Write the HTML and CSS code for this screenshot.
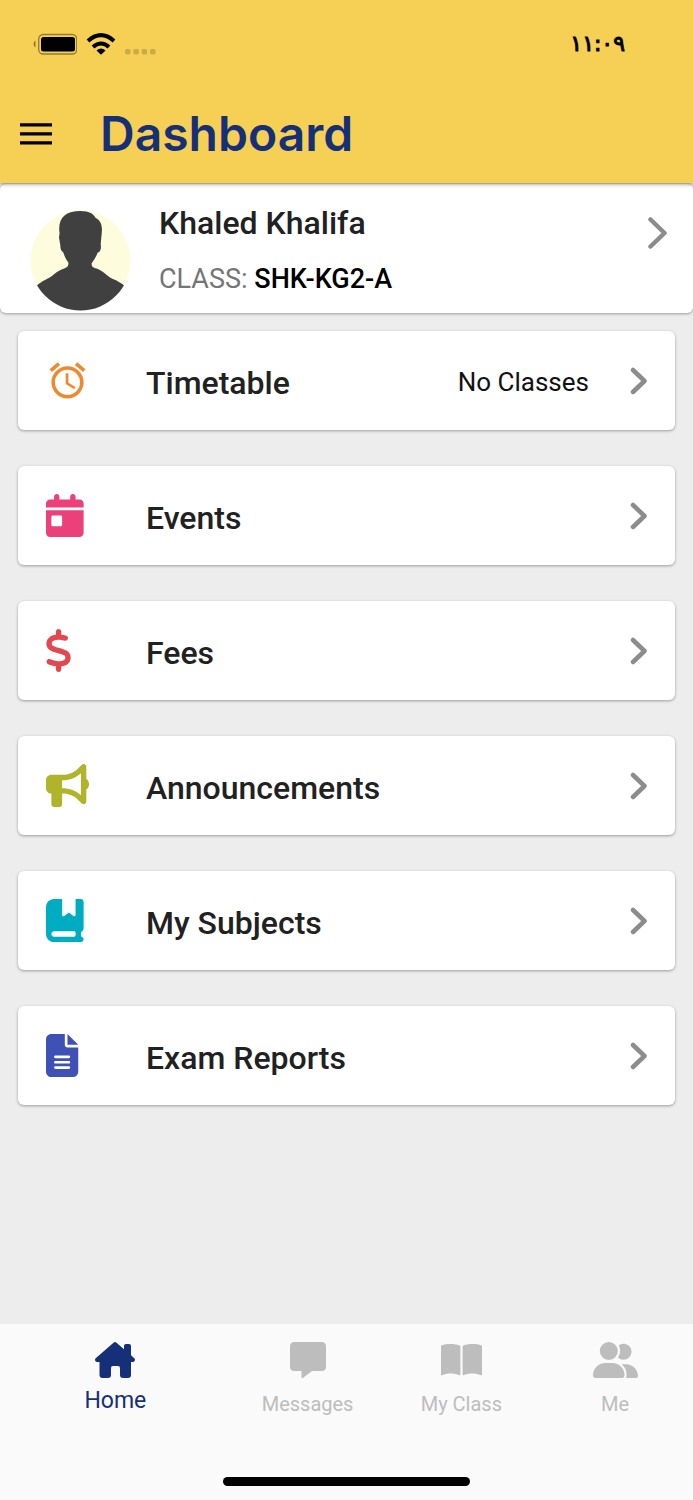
FILE: index.html
```html
<!DOCTYPE html>
<html lang="en">
<head>
<meta charset="utf-8">
<meta name="viewport" content="width=device-width, initial-scale=1">
<title>Dashboard</title>
<link rel="stylesheet" href="styles.css">
</head>
<body>
<div class="app">
  <header class="header">
    <div class="status">
      <div class="status-icons">
        <svg width="44" height="22" viewBox="0 0 44 22" aria-hidden="true"><path d="M2.500 7.500C0 9 0 13 2.500 14.500z" fill="#8d7830"/><rect x="5.700" y="1.500" width="38" height="19.500" rx="4.500" fill="none" stroke="#927c34" stroke-width="1.300"/><rect x="8" y="4" width="34" height="14.500" rx="2.500"/></svg>
        <svg class="wifi" width="30" height="22" viewBox="0 0 30 22" aria-hidden="true"><g fill="none" stroke="#000" stroke-width="4"><path d="M2 8Q15-3.600 28 8"/><path d="M7 14Q15 7 23 14"/></g><path d="M10.500 17.500Q15 13.600 19.500 17.500L15 21.800z"/></svg>
        <svg class="signal" width="32" height="6" viewBox="0 0 32 6" fill="#cbab45" aria-hidden="true"><rect width="5.600" height="5.600" rx="1.800"/><rect x="8.300" width="5.600" height="5.600" rx="1.800"/><rect x="16.600" width="5.600" height="5.600" rx="1.800"/><rect x="25" width="5.600" height="5.600" rx="1.800"/></svg>
      </div>
      <time class="clock" lang="ar">١١:٠٩</time>
    </div>
    <div class="titlebar">
      <button class="menu" type="button" aria-label="Menu"><svg width="32" height="22" viewBox="0 0 32 22"><path d="M0 1.800h32M0 10.800h32M0 19.800h32" stroke="#000" stroke-width="3.200"/></svg></button>
      <h1 class="title">Dashboard</h1>
    </div>
  </header>
  <main class="main">
    <a class="profile" href="#profile">
      <svg class="avatar" viewBox="0 0 100 100" aria-hidden="true"><defs><clipPath id="round"><circle cx="50" cy="50" r="49.500"/></clipPath></defs><g clip-path="url(#round)"><rect width="100" height="100" fill="#fdfcdc"/><path d="M29 21C28 7 36 1 50 1C59 1 63 4 65 8C70 10 72 16 71 23L70 34C71 39 69 42 67 42C65 48 62 51 61 53C61 56 62 57 66 58C74 61 77 67 84 69C90 72 93 74 98 79V101H0V79C8 74 11 71 17 68C23 66 26 60 34 58C38 56 38 55 38 52C35 48 34 45 33 42C31 41 30 39 30 35L29 29C28 26 30 24 29 21z" fill="#404040"/></g></svg>
      <span class="profile-text">
        <span class="name">Khaled Khalifa</span>
        <span class="class-line">CLASS: <b class="class-code">SHK-KG2-A</b></span>
      </span>
      <svg class="profile-arrow" width="20" height="32" viewBox="0 0 20 32" aria-hidden="true"><path d="M2.500 2.500L16.500 16L2.500 29.500"/></svg>
    </a>
    <nav class="list" aria-label="Sections">
      <a class="card" href="#timetable">
        <svg class="icon orange" viewBox="0 0 24 24" aria-hidden="true"><path d="M12 20a7 7 0 0 1-7-7 7 7 0 0 1 7-7 7 7 0 0 1 7 7 7 7 0 0 1-7 7m0-16a9 9 0 0 0-9 9 9 9 0 0 0 9 9 9 9 0 0 0 9-9 9 9 0 0 0-9-9m.5 4H11v6l4.750 2.850.750-1.230-4-2.370V8M7.880 3.390 6.600 1.860 2 5.710l1.290 1.530 4.590-3.850M22 5.720l-4.600-3.860-1.290 1.530 4.600 3.860L22 5.720z"/></svg>
        <span class="label">Timetable</span><span class="note">No Classes</span>
        <svg class="arrow" viewBox="0 0 18 28" aria-hidden="true"><path d="M3 3L14.500 14L3 25"/></svg>
      </a>
      <a class="card" href="#events">
        <svg class="icon pink" viewBox="0 0 512 512" aria-hidden="true"><path d="M128 0c17.700 0 32 14.300 32 32V64H288V32c0-17.700 14.300-32 32-32s32 14.300 32 32V64h48c26.500 0 48 21.500 48 48v48H0V112C0 85.500 21.500 64 48 64H96V32c0-17.700 14.300-32 32-32zM0 192H448V464c0 26.500-21.500 48-48 48H48c-26.500 0-48-21.500-48-48V192zm80 64c-8.800 0-16 7.200-16 16v96c0 8.800 7.200 16 16 16h96c8.800 0 16-7.200 16-16V272c0-8.800-7.200-16-16-16H80z"/></svg>
        <span class="label">Events</span>
        <svg class="arrow" viewBox="0 0 18 28" aria-hidden="true"><path d="M3 3L14.500 14L3 25"/></svg>
      </a>
      <a class="card" href="#fees">
        <svg class="icon red" viewBox="10 0 512 512" aria-hidden="true"><path d="M160 0c17.700 0 32 14.300 32 32V67.700c1.600 .2 3.100 .4 4.700 .7c.4 .1 .7 .1 1.100 .2l48 8.800c17.400 3.200 28.900 19.900 25.700 37.200s-19.900 28.900-37.200 25.700l-47.500-8.700c-31.300-4.600-58.900-1.500-78.300 6.200s-27.200 18.300-29 28.100c-2 10.700-.5 16.700 1.200 20.400c1.800 3.900 5.500 8.300 12.800 13.200c16.300 10.700 41.300 17.700 73.700 26.300l2.900 .8c28.600 7.600 63.600 16.800 89.600 33.800c14.200 9.300 27.600 21.900 35.900 39.500c8.500 17.900 10.300 37.900 6.400 59.200c-6.900 38-33.100 63.400-65.600 76.700c-13.700 5.600-28.600 9.200-44.400 11V480c0 17.700-14.300 32-32 32s-32-14.300-32-32V445.100c-.4-.1-.9-.1-1.300-.2l-.2 0c-24.400-3.800-64.500-14.300-91.500-26.300c-16.100-7.200-23.400-26.100-16.200-42.200s26.100-23.400 42.200-16.200c20.900 9.300 55.300 18.500 75.200 21.600c31.900 4.700 58.200 2 76-5.300c16.900-6.900 24.600-16.900 26.800-28.900c1.900-10.600 .4-16.700-1.300-20.400c-1.900-4-5.600-8.400-13-13.300c-16.400-10.700-41.500-17.700-74-26.300l-2.800-.7c-28.500-7.600-63.400-16.900-89.400-33.900c-14.200-9.300-27.500-22-35.800-39.600c-8.400-17.900-10.100-37.900-6.100-59.200C23.700 116 52.300 91.200 84.800 78.300c13.300-5.300 27.900-8.900 43.200-11V32c0-17.700 14.300-32 32-32z"/></svg>
        <span class="label">Fees</span>
        <svg class="arrow" viewBox="0 0 18 28" aria-hidden="true"><path d="M3 3L14.500 14L3 25"/></svg>
      </a>
      <a class="card" href="#announcements">
        <svg class="icon olive" viewBox="0 0 512 512" aria-hidden="true"><path d="M480 32c0-12.900-7.800-24.600-19.800-29.600s-25.700-2.200-34.900 6.900L381.700 53c-48 48-113.100 75-181 75H64c-35.300 0-64 28.700-64 64v96c0 35.300 28.700 64 64 64v128c0 17.700 14.300 32 32 32h64c17.700 0 32-14.300 32-32V352h8.700c67.900 0 133 27 181 75l43.600 43.600c9.200 9.200 22.900 11.900 34.900 6.900s19.800-16.600 19.800-29.600V300.400c18.600-8.800 32-32.500 32-60.400s-13.400-51.600-32-60.400V32zm-64 76.700V371.300C357.200 317.800 280.500 288 200.700 288H192V192h8.700c79.800 0 156.500-29.800 215.300-83.300z"/></svg>
        <span class="label">Announcements</span>
        <svg class="arrow" viewBox="0 0 18 28" aria-hidden="true"><path d="M3 3L14.500 14L3 25"/></svg>
      </a>
      <a class="card" href="#subjects">
        <svg class="icon teal" viewBox="0 0 512 512" aria-hidden="true"><path d="M0 96C0 43 43 0 96 0h96V190.700c0 13.400 15.500 20.900 26 12.500L272 160l54 43.200c10.500 8.400 26 .9 26-12.500V0h64c17.700 0 32 14.300 32 32V352c0 19-12 32-26 38c-8 18-8 40 0 58c14 4 26 16 26 32c0 17.700-14.300 32-32 32H96c-53 0-96-43-96-96V96zM64 416c0 17.700 14.300 32 32 32H336c24 0 24-64 0-64H96c-17.700 0-32 14.300-32 32z"/></svg>
        <span class="label">My Subjects</span>
        <svg class="arrow" viewBox="0 0 18 28" aria-hidden="true"><path d="M3 3L14.500 14L3 25"/></svg>
      </a>
      <a class="card" href="#reports">
        <svg class="icon indigo" viewBox="0 0 512 512" aria-hidden="true"><path d="M64 0C28.700 0 0 28.700 0 64V448c0 35.300 28.700 64 64 64H320c35.300 0 64-28.700 64-64V160H256c-17.700 0-32-14.300-32-32V0H64zM256 0V128H384L256 0zM112 256H272c8.800 0 16 7.200 16 16s-7.200 16-16 16H112c-8.800 0-16-7.200-16-16s7.200-16 16-16zm0 64H272c8.800 0 16 7.200 16 16s-7.200 16-16 16H112c-8.800 0-16-7.200-16-16s7.200-16 16-16zm0 64H272c8.800 0 16 7.200 16 16s-7.200 16-16 16H112c-8.800 0-16-7.200-16-16s7.200-16 16-16z"/></svg>
        <span class="label">Exam Reports</span>
        <svg class="arrow" viewBox="0 0 18 28" aria-hidden="true"><path d="M3 3L14.500 14L3 25"/></svg>
      </a>
    </nav>
  </main>
  <footer class="footer">
    <nav class="tabs" aria-label="Main">
      <a class="tab active" href="#home"><svg width="40" height="36" viewBox="0 0 40 36" aria-hidden="true"><path d="M18.500.7Q20-.6 21.500.7L29 7.200V4Q29 2 31 2H34Q36 2 36 4V13.200L39.300 16.200C40.700 17.500 39.800 20 38 20H36V33Q36 36 33 36H28Q25 36 25 33V26Q25 24 23 24H18Q16 24 16 26V33Q16 36 13 36H7.500Q4.500 36 4.500 33V20H2C.2 20-.7 17.500.7 16.200z"/></svg><span>Home</span></a>
      <a class="tab" href="#messages"><svg width="36" height="36" viewBox="0 0 36 36" aria-hidden="true"><path d="M4.500 0H31.500Q36 0 36 4.500V24.500Q36 29 31.500 29H22L13.200 35.700Q11.500 36.700 11.500 35V29H4.500Q0 29 0 24.500V4.500Q0 0 4.500 0z"/></svg><span>Messages</span></a>
      <a class="tab" href="#class"><svg width="41" height="36" viewBox="0 0 41 36" aria-hidden="true"><path d="M0 4.500Q0 3.700.8 3.300C5 1.400 14 1.400 18.700 3.400Q19.400 3.700 19.400 4.500V32.500Q19.400 33.500 18.500 33.200C13 31 6 31 1.200 33.200Q0 33.500 0 32.500zM21.600 4.500Q21.600 3.700 22.300 3.400C27 1.400 36 1.400 40.200 3.300Q41 3.700 41 4.500V32.500Q41 33.500 39.800 33.200C35 31 28 31 22.500 33.200Q21.600 33.500 21.600 32.500z"/></svg><span>My Class</span></a>
      <a class="tab" href="#me"><svg width="45" height="36" viewBox="0 0 45 36" aria-hidden="true"><circle cx="15.800" cy="9" r="9"/><path d="M25 15.500Q29 9.500 25.700 3.300A8 8 0 1 1 25 15.500zM0 33C0 26 6 21 12 21H19.500C26 21 31.500 26 31.500 33Q31.500 36 29 36H2.500Q0 36 0 33zM28.500 22.300H33C39.500 22.300 45 27.500 45 34Q45 36 43 36H33.200C34.200 30 33 26 28.500 22.300z"/></svg><span>Me</span></a>
    </nav>
    <div class="home-bar"></div>
  </footer>
</div>
</body>
</html>
```
FILE: styles.css
```css
* { box-sizing: border-box; }
body { margin: 0; font-family: Roboto, "Noto Sans", sans-serif; color: #212121; background: #ededed; }
a { color: inherit; text-decoration: none; }
svg { display: block; flex: none; }
.app { min-height: 100vh; display: flex; flex-direction: column; }
.header { background: #f6d055; display: flex; flex-direction: column; box-shadow: 0 1px 4px rgba(0, 0, 0, .45); z-index: 1; }
.status { height: 87px; padding: 0 68px 0 33px; display: flex; justify-content: space-between; align-items: center; }
.status-icons { display: flex; align-items: center; }
.wifi { margin-left: 9px; }
.signal { margin-left: 9px; align-self: flex-end; }
.clock { font: 22px/32px "DejaVu Sans", sans-serif; color: #000; -webkit-text-stroke: 1px #000; }
.titlebar { height: 96px; display: flex; align-items: center; gap: 48px; padding: 0 20px 3px; }
.menu { padding: 0; border: 0; background: none; }
.title { margin: 0; font: 600 48px/60px Inter, sans-serif; color: #152f78; }
.main { flex: 1; }
.profile { margin-top: 1px; min-height: 129px; background: #fff; border-radius: 6px; box-shadow: 0 1px 3px rgba(0, 0, 0, .35); display: flex; padding: 0 25px 0 30px; }
.avatar { width: 101px; height: 101px; align-self: flex-end; margin-bottom: 2px; }
.profile-text { flex: 1; padding: 19px 0 0 28px; display: flex; flex-direction: column; gap: 18px; }
.name, .label { font-size: 32px; line-height: 40px; font-weight: 500; }
.class-line { font-size: 27px; line-height: 36px; color: #757575; }
.class-code { font-weight: 500; color: #000; }
.profile-arrow { margin-top: 33px; }
.profile-arrow path, .arrow path { fill: none; stroke: #8c8c8c; stroke-width: 4.500; stroke-linecap: round; stroke-linejoin: round; }
.list { padding: 18px; display: flex; flex-direction: column; gap: 36px; }
.card { min-height: 99px; background: #fff; border-radius: 6px; box-shadow: 0 1px 3px rgba(0, 0, 0, .35); display: flex; align-items: center; padding: 0 27px 0 28px; }
.icon { width: 43px; height: 43px; fill: currentColor; }
.label { flex: 1; margin-left: 57px; padding-top: 4px; }
.note { font-size: 26px; line-height: 36px; color: #111; margin-right: 41px; padding-top: 2px; }
.arrow { width: 18px; height: 28px; }
.orange { color: #ed8a2f; }
.pink { color: #ec407a; }
.red { color: #e34850; }
.olive { color: #afb42b; }
.teal { color: #00acc1; }
.indigo { color: #3f51b5; }
.footer { min-height: 176px; background: #fafafa; display: flex; flex-direction: column; align-items: center; justify-content: space-between; padding-bottom: 14px; }
.tabs { width: 100%; display: flex; padding: 18px 1px 0 0; }
.tab { flex: 2; display: flex; flex-direction: column; align-items: center; gap: 12px; font-size: 20px; line-height: 28px; color: #bdbdbd; }
.tab svg { fill: currentColor; }
.active { flex: 3; gap: 9px; font-size: 23px; color: #152f78; }
.home-bar { width: 247px; height: 9px; border-radius: 5px; background: #000; }
```
